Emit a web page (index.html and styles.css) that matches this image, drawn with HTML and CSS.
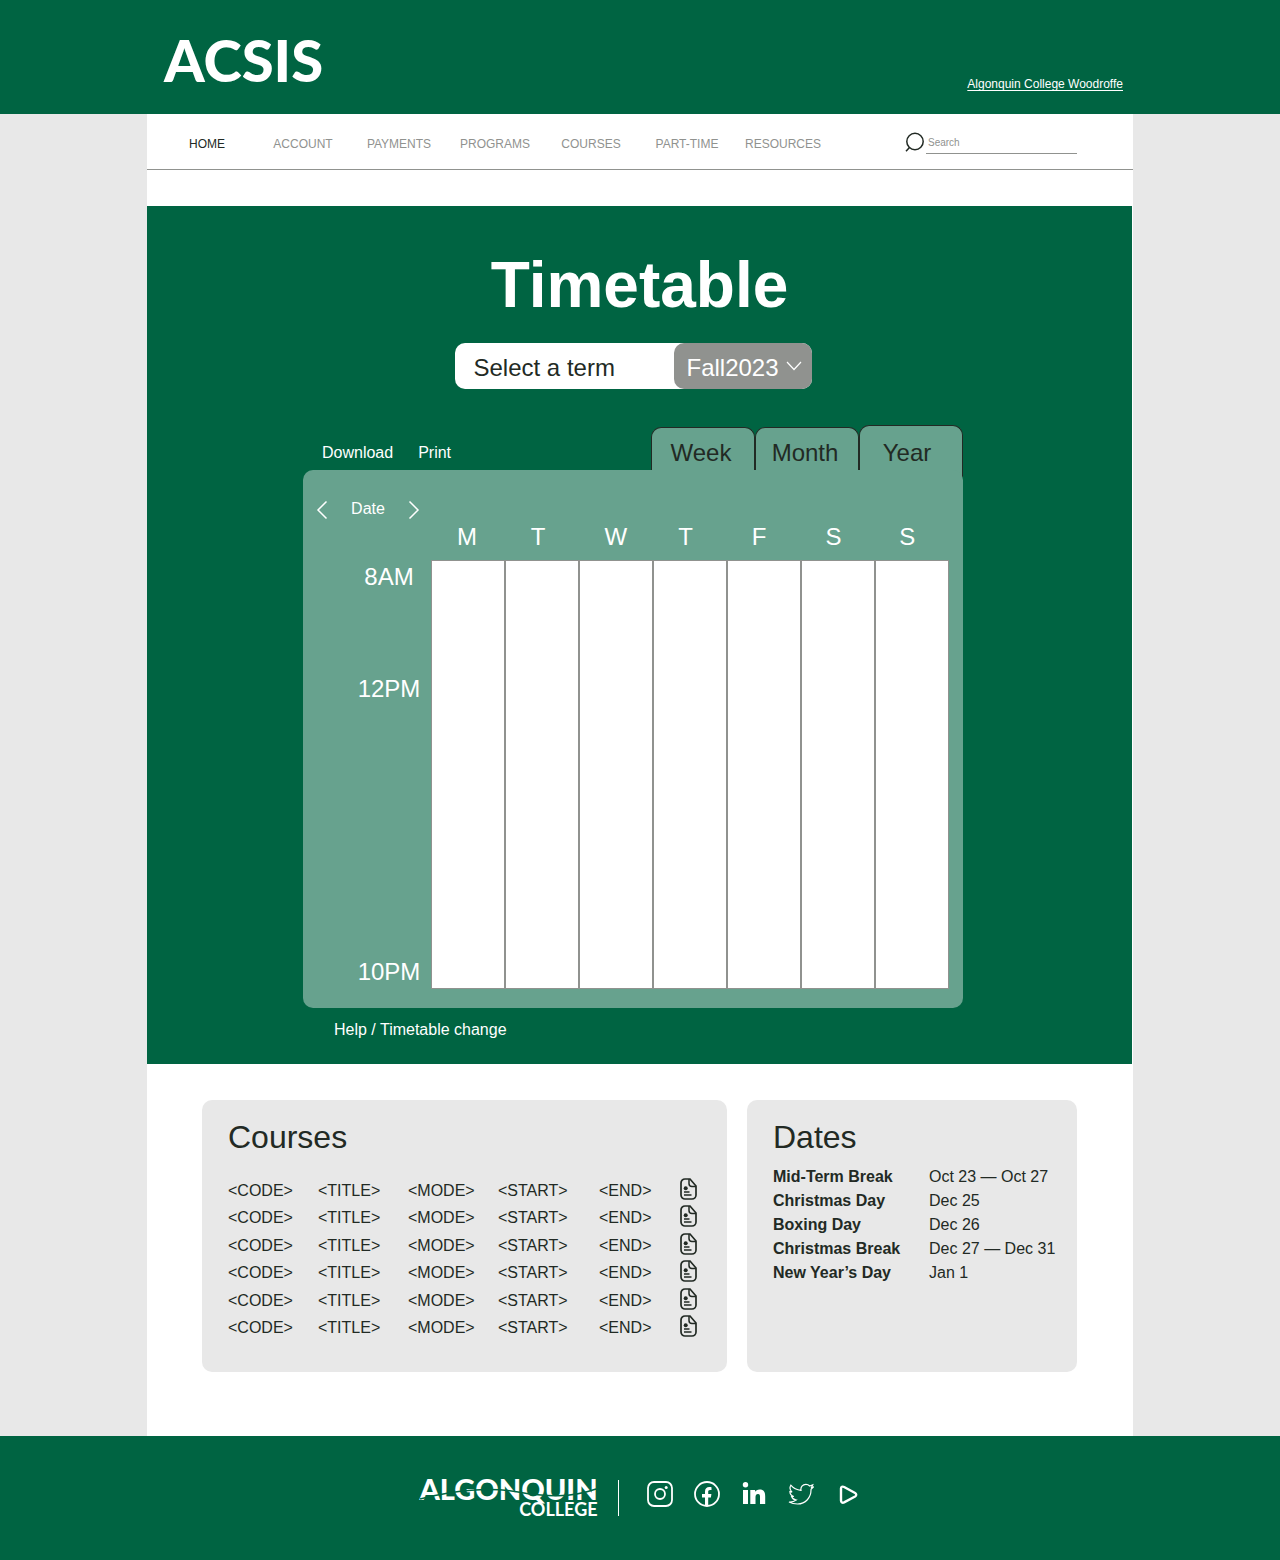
FILE: index.html
```html
<!DOCTYPE html>
<html lang="en">
<head>
<meta charset="utf-8">
<meta name="viewport" content="width=device-width, initial-scale=1">
<title>ACSIS – Timetable</title>
<link rel="stylesheet" href="styles.css">
</head>
<body>
<svg class="sprite" aria-hidden="true">
  <symbol id="doc" viewBox="0 0 17 22">
    <path d="M5 1h5l6 7v9a4 4 0 0 1-4 4H5a4 4 0 0 1-4-4V5a4 4 0 0 1 4-4z" fill="none" stroke="currentColor" stroke-width="1.7"/>
    <path d="M9 1v4.500a3 3 0 0 0 3 3h4" fill="none" stroke="currentColor" stroke-width="1.500"/>
    <circle cx="5.700" cy="10.200" r="2" fill="currentColor"/>
    <path d="M4 14h5.500M4 17h7.500" fill="none" stroke="currentColor" stroke-width="1.400"/>
  </symbol>
</svg>

<header class="masthead">
  <div class="masthead-inner">
    <a class="brand" href="#">ACSIS</a>
    <a class="campus" href="#">Algonquin College Woodroffe</a>
  </div>
</header>

<main class="page">
  <div class="topbar">
    <nav class="menu" aria-label="Main">
      <a class="menu-link current" href="#">HOME</a>
      <a class="menu-link" href="#">ACCOUNT</a>
      <a class="menu-link" href="#">PAYMENTS</a>
      <a class="menu-link" href="#">PROGRAMS</a>
      <a class="menu-link" href="#">COURSES</a>
      <a class="menu-link" href="#">PART-TIME</a>
      <a class="menu-link" href="#">RESOURCES</a>
    </nav>
    <form class="search">
      <svg class="search-icon" viewBox="0 0 20 20" aria-hidden="true"><circle cx="10" cy="9.500" r="8.200"/><path d="M4.500 15.500 1 19.200"/></svg>
      <input class="search-field" type="search" placeholder="Search" aria-label="Search">
    </form>
  </div>

  <section class="schedule">
    <h1 class="title">Timetable</h1>
    <div class="board">
      <form class="term">
        <label class="term-label" for="term">Select a term</label>
        <div class="term-choice">
          <select class="term-select" id="term"><option>Fall2023</option></select>
          <svg class="term-arrow" viewBox="0 0 16 10" aria-hidden="true"><path d="M1 1l7 7.500L15 1"/></svg>
        </div>
      </form>

      <div class="planner">
        <div class="toolbar">
          <div class="actions">
            <a class="plain-link" href="#">Download</a>
            <a class="plain-link" href="#">Print</a>
          </div>
          <div class="views">
            <button class="view" type="button">Week</button>
            <button class="view" type="button">Month</button>
            <button class="view view-active" type="button">Year</button>
          </div>
        </div>
        <div class="panel">
          <div class="date-nav">
            <button class="step" type="button" aria-label="Previous"><svg viewBox="0 0 12 20"><path d="M10.500 1.500 2 10l8.500 8.500"/></svg></button>
            <span>Date</span>
            <button class="step" type="button" aria-label="Next"><svg viewBox="0 0 12 20"><path d="M1.500 1.500 10 10l-8.500 8.500"/></svg></button>
          </div>
          <table class="week">
            <thead>
              <tr class="days"><td></td><th>M</th><th>T</th><th>W</th><th>T</th><th>F</th><th>S</th><th>S</th></tr>
            </thead>
            <tbody class="hours">
              <tr class="morning"><th>8AM</th><td></td><td></td><td></td><td></td><td></td><td></td><td></td></tr>
              <tr class="afternoon"><th>12PM</th><td></td><td></td><td></td><td></td><td></td><td></td><td></td></tr>
              <tr class="evening"><th>10PM</th><td></td><td></td><td></td><td></td><td></td><td></td><td></td></tr>
            </tbody>
          </table>
        </div>
        <p class="help"><a class="plain-link" href="#">Help / Timetable change</a></p>
      </div>
    </div>
  </section>

  <div class="cards">
    <section class="card">
      <h2 class="card-title">Courses</h2>
      <table class="courses">
        <colgroup><col class="w-col"><col class="w-col"><col class="w-col"><col class="w-start"><col class="w-end"><col></colgroup>
        <tbody>
        <tr><td>&lt;CODE&gt;</td><td>&lt;TITLE&gt;</td><td>&lt;MODE&gt;</td><td>&lt;START&gt;</td><td>&lt;END&gt;</td><td><a class="doc" href="#" aria-label="Outline"><svg><use href="#doc"/></svg></a></td></tr>
        <tr><td>&lt;CODE&gt;</td><td>&lt;TITLE&gt;</td><td>&lt;MODE&gt;</td><td>&lt;START&gt;</td><td>&lt;END&gt;</td><td><a class="doc" href="#" aria-label="Outline"><svg><use href="#doc"/></svg></a></td></tr>
        <tr><td>&lt;CODE&gt;</td><td>&lt;TITLE&gt;</td><td>&lt;MODE&gt;</td><td>&lt;START&gt;</td><td>&lt;END&gt;</td><td><a class="doc" href="#" aria-label="Outline"><svg><use href="#doc"/></svg></a></td></tr>
        <tr><td>&lt;CODE&gt;</td><td>&lt;TITLE&gt;</td><td>&lt;MODE&gt;</td><td>&lt;START&gt;</td><td>&lt;END&gt;</td><td><a class="doc" href="#" aria-label="Outline"><svg><use href="#doc"/></svg></a></td></tr>
        <tr><td>&lt;CODE&gt;</td><td>&lt;TITLE&gt;</td><td>&lt;MODE&gt;</td><td>&lt;START&gt;</td><td>&lt;END&gt;</td><td><a class="doc" href="#" aria-label="Outline"><svg><use href="#doc"/></svg></a></td></tr>
        <tr><td>&lt;CODE&gt;</td><td>&lt;TITLE&gt;</td><td>&lt;MODE&gt;</td><td>&lt;START&gt;</td><td>&lt;END&gt;</td><td><a class="doc" href="#" aria-label="Outline"><svg><use href="#doc"/></svg></a></td></tr>
        </tbody>
      </table>
    </section>
    <section class="card">
      <h2 class="card-title">Dates</h2>
      <table class="dates">
        <tbody>
        <tr><th>Mid-Term Break</th><td>Oct 23 — Oct 27</td></tr>
        <tr><th>Christmas Day</th><td>Dec 25</td></tr>
        <tr><th>Boxing Day</th><td>Dec 26</td></tr>
        <tr><th>Christmas Break</th><td>Dec 27 — Dec 31</td></tr>
        <tr><th>New Year’s Day</th><td>Jan 1</td></tr>
        </tbody>
      </table>
    </section>
  </div>
</main>

<footer class="footer">
  <a class="college" href="#">
    <span class="college-name">ALGONQUIN</span>
    <span class="college-sub">COLLEGE</span>
    <svg class="college-cut" viewBox="0 0 176 22" aria-hidden="true"><path d="M0 19C34 10 70 7 98 12S150 18 176 9"/></svg>
  </a>
  <div class="social">
    <a href="#" aria-label="Instagram"><svg viewBox="0 0 26 26"><rect x="1" y="1" width="24" height="24" rx="6"/><circle cx="13" cy="13" r="5"/><circle class="solid" cx="19.200" cy="6.500" r="1.500"/></svg></a>
    <a href="#" aria-label="Facebook"><svg viewBox="0 0 26 26"><circle cx="13" cy="13" r="12"/><path class="solid" d="M11 25v-8.500H8V13h3v-2.500C11 7.600 12.700 6 15.300 6c1 0 2 .200 2.200.200v2.900H16c-1.300 0-1.800.900-1.800 1.700V13h3.200l-.500 3.500h-2.700V25z"/></svg></a>
    <a href="#" aria-label="LinkedIn"><svg viewBox="0 0 26 26"><path class="solid" d="M2 9h5v14H2zM9.300 9h4.800v1.800c.7-1.300 2.300-2.300 4.500-2.300 4.500 0 5.600 2.900 5.600 6.800V23h-5.200v-6.800c0-1.800 0-3.300-2-3.300s-2.500 1.500-2.500 3.300V23H9.300z"/><circle class="solid" cx="4.500" cy="3.800" r="2.700"/></svg></a>
    <a href="#" aria-label="Twitter"><svg viewBox="0 0 26 26"><path class="thin" d="M1 21c3 .200 5.300-.500 7.200-2-2.200-.300-3.900-1.500-4.600-3.500h2.200c-2.400-.800-3.900-2.800-3.900-5l2.200.6C2 9.300 1.500 6.600 2.800 4.200 5.500 7.400 8.900 9 13 9.400c-.600-3.300 1.600-6 4.900-6 1.500 0 2.800.600 3.800 1.600l3-1.200-1.200 2.700 1.700-.400-2.200 2.300C23.300 16.500 17.500 23 9.500 23 6.300 23 3.500 22.300 1 21z"/></svg></a>
    <a href="#" aria-label="Video"><svg viewBox="0 0 26 26"><path class="thick" d="M6 7.500v12c0 2 1.500 2.700 3.100 1.900l11-5.900c1.500-.900 1.500-2.600 0-3.500l-11-6C7.500 5.100 6 5.800 6 7.500z"/></svg></a>
  </div>
</footer>
</body>
</html>
```
FILE: styles.css
```css
:root {
  --green: #006442;
  --mint: #67a28e;
  --grey: #e8e8e8;
  --mid: #90928f;
  --ink: #222a24;
}

* { box-sizing: border-box; }

body {
  margin: 0;
  background: var(--grey);
  color: var(--ink);
  font: 16px/24px "Liberation Sans", Arial, sans-serif;
}

a { color: inherit; text-decoration: none; }
button, input, select { font: inherit; color: inherit; }
h1, h2, p { margin: 0; font-weight: 400; }
table { border-collapse: collapse; }
th, td { padding: 0; text-align: left; font-weight: 400; }
.sprite { display: none; }

/* Masthead */
.masthead { background: var(--green); color: #fff; }
.masthead-inner {
  display: flex;
  justify-content: space-between;
  align-items: flex-end;
  max-width: 986px;
  margin: 0 auto;
  padding: 28px 10px 20px 17px;
}
.brand { font: 900 58px/64px Lato, sans-serif; padding-bottom: 2px; }
.campus { font-size: 12px; line-height: 20px; text-decoration: underline; text-underline-offset: 2px; }

/* Navigation */
.page { max-width: 986px; margin: 0 auto; background: #fff; }
.topbar {
  display: flex;
  justify-content: space-between;
  align-items: center;
  padding: 0 56px 0 12px;
  height: 56px;
  border-bottom: 1px solid var(--mid);
}
.menu { display: grid; grid-template-columns: repeat(7, 96px); padding-top: 4px; }
.menu-link { text-align: center; font-size: 12px; line-height: 16px; color: var(--mid); }
.current { color: var(--ink); }
.search { display: flex; gap: 1px; padding-top: 2px; }
.search-icon { width: 20px; height: 20px; fill: none; stroke: var(--ink); stroke-width: 1.5; }
.search-field {
  width: 151px;
  height: 22px;
  padding: 2px 2px 0;
  border: 0;
  border-bottom: 1px solid var(--mid);
  border-radius: 0;
  background: none;
  font-size: 10px;
  appearance: none;
  outline: 0;
}
.search-field::placeholder { color: var(--mid); }

/* Timetable */
.schedule {
  margin: 36px 1px 0 0;
  padding: 43px 24px 22px;
  background: var(--green);
  color: #fff;
}
.title { text-align: center; font-size: 64px; line-height: 72px; font-weight: 700; }
.board { padding-right: 13px; }
.term {
  display: flex;
  justify-content: space-between;
  width: 357px;
  height: 46px;
  margin: 22px auto 0;
  background: #fff;
  border-radius: 10px;
  font-size: 24px;
}
.term-label { padding: 2px 0 0 19px; line-height: 46px; color: var(--ink); }
.term-choice { display: grid; align-items: center; width: 138px; border-radius: 10px; background: var(--mid); }
.term-select {
  grid-area: 1 / 1;
  width: 100%;
  height: 46px;
  padding: 4px 0 0 13px;
  border: 0;
  background: none;
  appearance: none;
}
.term-arrow {
  grid-area: 1 / 1;
  justify-self: end;
  width: 16px;
  height: 10px;
  margin-right: 10px;
  fill: none;
  stroke: #fff;
  stroke-width: 1.2;
  pointer-events: none;
}
.planner { max-width: 660px; margin: 36px auto 0; }
.toolbar { display: flex; justify-content: space-between; align-items: flex-end; }
.actions { display: flex; gap: 25px; padding: 0 0 5px 19px; }
.views { display: flex; align-items: flex-end; }
.view {
  width: 104px;
  height: 43px;
  padding: 8px 4px 0 0;
  border: 1px solid var(--ink);
  border-bottom: 0;
  border-radius: 10px 10px 0 0;
  background: var(--mint);
  color: var(--ink);
  font-size: 24px;
}
.view-active { height: 52px; margin-bottom: -7px; padding: 6px 8px 4px 0; }
/* Sits above the tabs so the active one tucks in behind the rounded corner */
.panel { position: relative; padding: 27px 14px 20px 0; background: var(--mint); border-radius: 10px; }
.date-nav { display: flex; align-items: center; justify-content: space-between; width: 104px; margin-left: 13px; }
.step { display: flex; padding: 2px 0 0; border: 0; background: none; }
.step svg { width: 12px; height: 20px; fill: none; stroke: #fff; stroke-width: 1.5; }
.week { display: block; font-size: 24px; line-height: 34px; }
.week thead, .hours { display: block; }
.days { display: grid; grid-template-columns: 154px repeat(7, 1fr); margin-right: -24px; height: 39px; line-height: 32px; }
.hours tr { display: grid; grid-template-columns: 128px repeat(7, 1fr); }
.hours th { padding-left: 44px; text-align: center; }
.hours td { background: #fff; border: solid var(--mid); border-width: 0 1px; }
.morning { height: 112px; }
.hours .morning td { border-top-width: 1px; }
.afternoon { height: 283px; }
.evening { height: 33px; }
.hours .evening td { border-bottom-width: 1px; }
.help { padding: 10px 0 0 31px; }

/* Cards */
.cards {
  display: grid;
  grid-template-columns: 525fr 330fr;
  gap: 20px;
  padding: 36px 56px 64px 55px;
}
.card { min-height: 272px; padding: 16px 20px 30px 26px; border-radius: 10px; background: var(--grey); }
.card-title { font-size: 32px; line-height: 42px; }
.courses { width: 100%; height: 165px; margin-top: 19px; table-layout: fixed; }
.w-col { width: 90px; }
.w-start { width: 101px; }
.w-end { width: 81px; }
.doc { display: flex; margin-bottom: 4px; }
.doc svg { width: 17px; height: 22px; }
.dates { margin-top: 7px; }
.dates th { width: 156px; font-weight: 700; }

/* Footer */
.footer {
  display: flex;
  justify-content: center;
  gap: 20px;
  padding: 44px 24px;
  background: var(--green);
  color: #fff;
}
.college { position: relative; display: flex; flex-direction: column; align-items: flex-end; font-family: Lato, sans-serif; }
.college-name { font-size: 29px; font-weight: 900; line-height: 18px; }
.college-sub { font-size: 18px; font-weight: 700; line-height: 18px; padding-top: 2px; margin-bottom: -2px; }
.college-cut { position: absolute; left: 0; top: 0; width: 100%; height: 22px; fill: none; stroke: var(--green); stroke-width: 1.5; }
.social { display: flex; gap: 21px; padding-left: 28px; border-left: 1px solid #fff; }
.social svg { display: block; width: 26px; height: 26px; margin-top: 1px; fill: none; stroke: #fff; stroke-width: 1.8; }
.social .solid { fill: #fff; stroke: none; }
.social .thin { stroke-width: 1.2; }
.social .thick { stroke-width: 2.4; }
```
